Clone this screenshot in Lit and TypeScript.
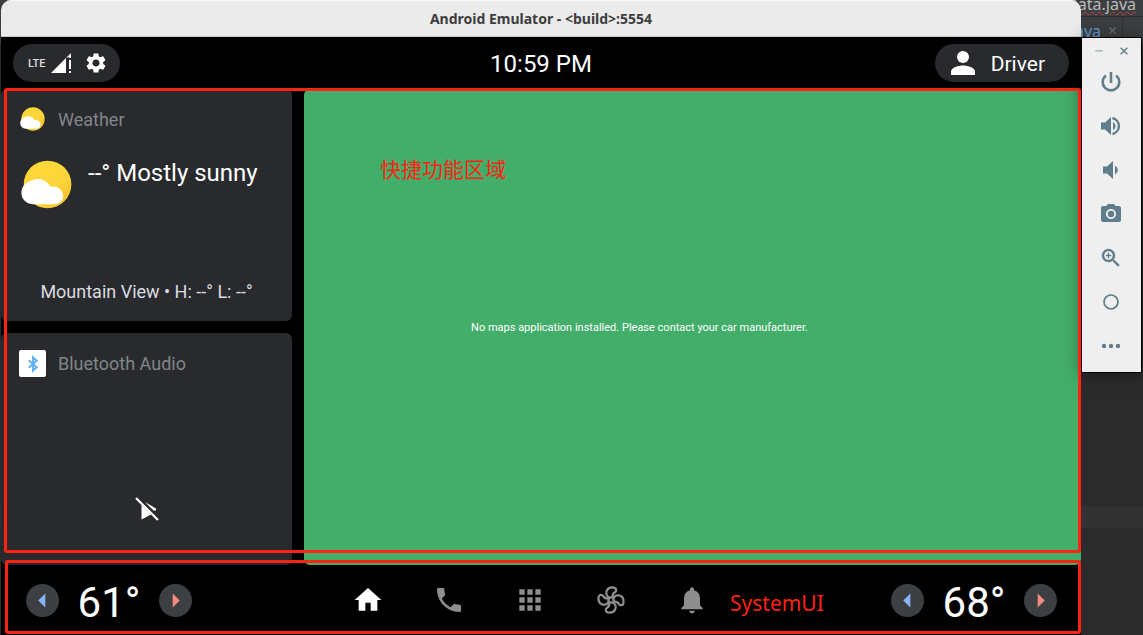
import { LitElement, html, css, svg } from "lit";
import { customElement, property } from "lit/decorators.js";

const gear = "M19.14 12.94c.04-.3.06-.61.06-.94 0-.32-.02-.64-.07-.94l2.03-1.58c.18-.14.23-.41.12-.61l-1.92-3.32c-.12-.22-.37-.29-.59-.22l-2.39.96c-.5-.38-1.03-.7-1.62-.94l-.36-2.54c-.04-.24-.24-.41-.48-.41h-3.84c-.24 0-.43.17-.47.41l-.36 2.54c-.59.24-1.13.57-1.62.94l-2.39-.96c-.22-.08-.47 0-.59.22L2.74 8.87c-.12.21-.08.47.12.61l2.03 1.58c-.05.3-.09.63-.09.94s.02.64.07.94l-2.03 1.58c-.18.14-.23.41-.12.61l1.92 3.32c.12.22.37.29.59.22l2.39-.96c.5.38 1.03.7 1.62.94l.36 2.54c.05.24.24.41.48.41h3.84c.24 0 .44-.17.47-.41l.36-2.54c.59-.24 1.13-.56 1.62-.94l2.39.96c.22.08.47 0 .59-.22l1.92-3.32c.12-.22.07-.47-.12-.61l-2.01-1.58zM12 15.6c-1.98 0-3.6-1.62-3.6-3.6s1.62-3.6 3.6-3.6 3.6 1.62 3.6 3.6-1.62 3.6-3.6 3.6z";

const petal = "M10.800 10.400C8.800 9.300 8 7 8.800 5C9.700 3 12.200 2.400 14.200 2.700C16.400 3.100 16.300 5.400 14.900 6.200C13.400 7 13 8.300 13.300 10.200";

const icons = {
  signal: svg`<path d="M2 22 17 7V22z"/><path d="M17 7 22 2v5h-2v-1z"/><path d="M20 9h2v9h-2zM20 20h2v2h-2z"/>`,
  gear: svg`<path fill-rule="evenodd" d=${gear}/>`,
  person: svg`<circle cx="12" cy="6" r="6"/><path d="M0 24v-3.500C0 16.500 8 14.500 12 14.500s12 2 12 6V24z"/>`,
  home: svg`<path d="M10 20v-6h4v6h5v-8h3L12 3 2 12h3v8z"/>`,
  phone: svg`<path d="M20 15.500c-1.250 0-2.450-.2-3.570-.57-.1-.03-.21-.05-.31-.05-.26 0-.51.1-.71.29l-2.200 2.200c-2.830-1.440-5.150-3.750-6.590-6.580l2.200-2.210c.28-.27.36-.66.25-1.010C8.700 6.450 8.500 5.250 8.500 4c0-.55-.45-1-1-1H4c-.55 0-1 .45-1 1 0 9.390 7.610 17 17 17 .55 0 1-.45 1-1v-3.500c0-.55-.45-1-1-1z"/>`,
  apps: svg`<path d="M4 8h4V4H4v4zm6 12h4v-4h-4v4zm-6 0h4v-4H4v4zm0-6h4v-4H4v4zm6 0h4v-4h-4v4zm6-10v4h4V4h-4zm-6 4h4V4h-4v4zm6 6h4v-4h-4v4zm0 6h4v-4h-4v4z"/>`,
  fan: svg`<g fill="none" stroke="currentColor" stroke-width="1.700"><circle cx="12" cy="12" r="2"/>${[0, 90, 180, 270].map((a) => svg`<path transform="rotate(${a} 12 12)" d=${petal}/>`)}</g>`,
  bell: svg`<path d="M12 22c1.100 0 2-.9 2-2h-4c0 1.100.89 2 2 2zm6-6v-5c0-3.070-1.640-5.640-4.500-6.320V4c0-.83-.67-1.500-1.500-1.500s-1.500.67-1.500 1.500v.68C7.630 5.360 6 7.920 6 11v5l-2 2v1h16v-1l-2-2z"/>`,
  power: svg`<path d="M12 2v11M17 5.400a8.300 8.300 0 1 1-10 0" fill="none" stroke="currentColor" stroke-width="2.500"/>`,
  loud: svg`<path d="M2 8.500v7h4l6 5.500V3L6 8.500H2zm14.500 3.500c0-1.770-1.020-3.290-2.500-4.030v8.050c1.480-.73 2.500-2.250 2.500-4.020z"/><path d="M13.500 4A8.200 8.200 0 0 1 13.500 20" fill="none" stroke="currentColor" stroke-width="2.400"/>`,
  quiet: svg`<path d="M18.800 12c0-1.970-1.120-3.590-2.800-4.330v8.650c1.680-.73 2.800-2.350 2.800-4.320zM4 8.500v7h4l6 5.500V3L8 8.500H4z"/>`,
  camera: svg`<circle cx="12" cy="12" r="3.200"/><path d="M9 2 7.170 4H4c-1.100 0-2 .9-2 2v12c0 1.100.9 2 2 2h16c1.100 0 2-.9 2-2V6c0-1.100-.9-2-2-2h-3.170L15 2H9zm3 15c-2.760 0-5-2.240-5-5s2.240-5 5-5 5 2.240 5 5-2.240 5-5 5z"/>`,
  zoom: svg`<path d="M15.500 14h-.79l-.28-.27C15.410 12.590 16 11.110 16 9.500 16 5.910 13.090 3 9.500 3S3 5.910 3 9.500 5.910 16 9.500 16c1.610 0 3.090-.59 4.230-1.570l.27.28v.79l5 4.990L20.490 19l-4.990-5zm-6 0C7.010 14 5 11.990 5 9.500S7.010 5 9.500 5 14 7.010 14 9.500 11.990 14 9.500 14zM12 10h-2v2H9v-2H7V9h2V7h1v2h2v1z" stroke="currentColor" stroke-width=".4"/>`,
  circle: svg`<circle cx="12" cy="12" r="7" fill="none" stroke="currentColor" stroke-width="1.700"/>`,
  more: svg`<circle cx="5" cy="12" r="2.200"/><circle cx="12" cy="12" r="2.200"/><circle cx="19" cy="12" r="2.200"/>`,
  minus: svg`<path d="M3 10h18v3H3z" opacity=".6"/>`,
  close: svg`<path d="m4 4 16 16M20 4 4 20" fill="none" stroke="currentColor" stroke-width="3.500"/>`,
  left: svg`<path d="M16 2v20L6 12z"/>`,
  right: svg`<path d="M8 2v20l10-10z"/>`,
  sun: svg`<defs><linearGradient id="g" x1="0" y1="0" x2="1" y2="1"><stop offset="0" stop-color="#fdd835"/><stop offset=".6" stop-color="#fdd53a"/><stop offset="1" stop-color="#f3b92c"/></linearGradient></defs><circle cx="12.500" cy="11.500" r="11.200" fill="url(#g)"/><path fill="#fff" d="M5.500 20.800a5.300 5.300 0 0 1-5.300-5.700c.1-2.500 1.800-4.300 3.600-5 2.600-1.500 6.200-1.900 8.800.8.600.5.900 1.100 1.200 1.700 3-.7 5.800 1.100 6 4 .1 2.500-1.700 4.200-4 4.200z"/>`,
  bluetooth: svg`<path fill="none" stroke="#64b0f4" stroke-width="3" d="m5.500 6.500 12 10.500-5.500 5V2l5.500 5-12 10.500"/>`,
  unavailable: svg`<path d="M1 1 23 23" fill="none" stroke="currentColor" stroke-width="2.200"/><path d="M6.500 8 16 17.500 6.500 22.500zM10 5l11 6.500v2h-2.500z"/>`,
};

type IconName = keyof typeof icons;

@customElement("ui-icon")
export class UiIcon extends LitElement {
  @property() name: IconName = "home";
  static styles = css`
    :host { display: block; flex: none; width: 24px; height: 24px; }
    svg { display: block; width: 100%; height: 100%; fill: currentColor; overflow: visible; }
  `;
  render() {
    return html`<svg viewBox="0 0 24 24" aria-hidden="true">${icons[this.name]}</svg>`;
  }
}

@customElement("temp-control")
export class TempControl extends LitElement {
  @property({ type: Number }) value = 61;
  static styles = css`
    :host { display: flex; align-items: center; gap: 18px; }
    button { display: grid; place-items: center; width: 33px; height: 33px; border: 0; padding: 0; border-radius: 50%; background: #3c4043; }
    ui-icon { width: 17px; height: 17px; }
    .cool { color: #8ab4f8; }
    .warm { color: #f28b82; }
    .value { width: 64px; text-align: center; font: 42px/48px Roboto, sans-serif; color: #fff; padding-top: 6px; }
  `;
  render() {
    return html`
      <button class="cool" aria-label="Cooler"><ui-icon name="left"></ui-icon></button>
      <span class="value">${this.value}°</span>
      <button class="warm" aria-label="Warmer"><ui-icon name="right"></ui-icon></button>
    `;
  }
}

@customElement("emulator-tools")
export class EmulatorTools extends LitElement {
  static styles = css`
    :host { display: block; box-sizing: border-box; border: 1px solid #000; background: #efefef; padding-bottom: 4px; color: #607d8b; box-shadow: 0 2px 18px rgba(0, 0, 0, 0.4); }
    button { display: grid; place-items: center; border: 0; padding: 0 1px 0 0; background: none; color: inherit; width: 100%; height: 44px; }
    .window { display: flex; justify-content: center; gap: 5px; padding-top: 4px; }
    .window button { width: 20px; height: 18px; padding: 0; }
    .window ui-icon { width: 10px; height: 10px; }
  `;
  render() {
    const tools: [IconName, string][] = [
      ["power", "Power"], ["loud", "Volume up"], ["quiet", "Volume down"], ["camera", "Take screenshot"],
      ["zoom", "Zoom"], ["circle", "Home"], ["more", "More"],
    ];
    return html`
      <div class="window">
        <button aria-label="Minimize"><ui-icon name="minus"></ui-icon></button>
        <button aria-label="Close"><ui-icon name="close"></ui-icon></button>
      </div>
      ${tools.map(([icon, label]) => html`<button aria-label=${label}><ui-icon name=${icon}></ui-icon></button>`)}
    `;
  }
}

@customElement("app-root")
export class AppRoot extends LitElement {
  static styles = css`
    :host { display: block; position: relative; min-height: 100vh; overflow: hidden; background: #2b2b2b; font-family: Roboto, sans-serif; color: #fff; }
    .ide { position: absolute; inset: 0; color: #bbb; font: 16px/18px "Noto Sans", sans-serif; }
    .path { display: flex; justify-content: flex-end; height: 16px; padding-right: 7px; background: #3c3f41; border-bottom: 1px solid #2b2d2e; line-height: 8px; }
    .path span { text-decoration: underline wavy #bc3f3c 1px; }
    .tabs { display: flex; justify-content: flex-end; align-items: center; height: 27px; background: #3c3f41; }
    .tab { display: flex; gap: 7px; align-items: center; height: 27px; padding-right: 5px; margin-right: 20px; border-right: 1px solid #2f3133; color: #5f9bd0; }
    .tab ui-icon { width: 9px; height: 9px; color: #6e7275; }
    .caret-line { position: absolute; top: 506px; left: 0; right: 0; height: 22px; background: #323232; }
    .desktop { position: relative; display: grid; grid-template-columns: minmax(0, 1fr) 61px; align-items: start; min-height: 100vh; padding: 0 1px; }
    .emulator { display: flex; flex-direction: column; min-height: 100vh; border-radius: 10px 10px 0 0; overflow: hidden; background: #000; }
    emulator-tools { margin-top: 37px; }
    .title { margin: 0; height: 37px; box-sizing: border-box; background: #ebebeb; border-top: 1px solid #f8f8f8; border-bottom: 1px solid #c8c8c8; color: #3d3d3d; text-align: center; font: bold 14px/35px "Noto Sans", sans-serif; }
    .status { display: grid; grid-template-columns: 1fr auto 1fr; align-items: center; height: 52px; padding: 0 12px; }
    .pill { display: flex; align-items: center; height: 38px; border: 0; border-radius: 19px; background: #292a2d; color: #fff; font: 21px/24px Roboto, sans-serif; }
    .network { justify-self: start; padding: 0 12px 0 15px; gap: 3px; }
    .network span { padding-top: 2px; font-size: 11px; font-weight: 500; color: #dadce0; }
    .network ui-icon:last-child { margin-left: 8px; }
    .driver { justify-self: end; padding: 0 24px 0 16px; gap: 16px; }
    .driver span { padding-top: 2px; }
    .clock { padding-top: 2px; font-size: 24px; line-height: 28px; }
    .main { flex: 1; display: grid; grid-template-columns: 291px minmax(0, 1fr); gap: 12px; }
    .cards { display: grid; grid-template-rows: 1fr 1fr; gap: 12px; }
    .card { display: flex; flex-direction: column; border-radius: 6px; background: #292a2d; padding: 17px 16px; }
    .card-head { display: flex; align-items: center; gap: 12px; height: 27px; padding-left: 2px; color: #80868b; font-size: 18px; line-height: 24px; }
    .card-head h2 { margin: 0; font: inherit; }
    .card-head > ui-icon { width: 25px; height: 25px; margin: 0 1px; }
    .app { display: grid; place-items: center; width: 27px; height: 27px; border-radius: 2px; background: #fff; }
    .app ui-icon { width: 16px; height: 16px; }
    .weather { display: flex; gap: 16px; padding: 27px 4px 0; font-size: 24px; line-height: 26px; }
    .weather ui-icon { width: 51px; height: 51px; }
    .weather p, .place { margin: 0; }
    .place { margin-top: auto; text-align: center; color: #dadce0; font-size: 18px; line-height: 24px; }
    .off { margin: auto auto 27px; }
    .map { display: grid; place-items: center; border-radius: 6px; background: #43ae6a; font-size: 11px; line-height: 16px; text-align: center; }
    .map p { margin: 0; padding: 2px 106px 0 0; }
    .nav { display: grid; grid-template-columns: 1fr auto 1fr; align-items: center; height: 70px; padding: 0 24px 0 25px; }
    .nav temp-control:last-child { justify-self: end; }
    .apps { display: flex; padding-right: 24px; color: #8e8e8e; }
    .apps a { display: grid; place-items: center; width: 81px; height: 48px; color: inherit; }
    .apps a.current { color: #fff; }
    .apps ui-icon { width: 32px; height: 32px; }
    .mark { position: absolute; box-sizing: border-box; border: 3px solid #ff2314; border-radius: 3px; left: 4px; right: 62px; pointer-events: none; }
    .mark-main { top: 88px; bottom: 82px; }
    .mark-nav { left: 5px; top: 560px; bottom: 1px; }
    .note { position: absolute; color: #ff2314; font: 21px/28px "Noto Sans", "Noto Sans CJK SC", sans-serif; }
    .note-main { left: 373px; top: 64px; }
    .note-nav { left: 722px; top: 26px; }
  `;
  render() {
    const apps: [IconName, string][] = [["home", "Home"], ["phone", "Phone"], ["apps", "Apps"], ["fan", "Climate"], ["bell", "Notifications"]];
    return html`
      <div class="ide">
        <div class="path"><span>Data.java</span></div>
        <div class="tabs"><div class="tab">.java<ui-icon name="close"></ui-icon></div></div>
        <div class="caret-line"></div>
      </div>
      <div class="desktop">
        <section class="emulator">
          <h1 class="title">Android Emulator - &lt;build&gt;:5554</h1>
          <header class="status">
            <button class="pill network" aria-label="Network and settings">
              <span>LTE</span><ui-icon name="signal"></ui-icon><ui-icon name="gear"></ui-icon>
            </button>
            <time class="clock">10:59 PM</time>
            <button class="pill driver"><ui-icon name="person"></ui-icon><span>Driver</span></button>
          </header>
          <main class="main">
            <div class="cards">
              <article class="card">
                <div class="card-head"><ui-icon name="sun"></ui-icon><h2>Weather</h2></div>
                <div class="weather"><ui-icon name="sun"></ui-icon><p>--° Mostly sunny</p></div>
                <p class="place">Mountain View • H: --° L: --°</p>
              </article>
              <article class="card">
                <div class="card-head"><span class="app"><ui-icon name="bluetooth"></ui-icon></span><h2>Bluetooth Audio</h2></div>
                <ui-icon class="off" name="unavailable"></ui-icon>
              </article>
            </div>
            <section class="map"><p>No maps application installed. Please contact your car manufacturer.</p></section>
          </main>
          <footer class="nav">
            <temp-control .value=${61}></temp-control>
            <nav class="apps">
              ${apps.map(([icon, label], i) => html`<a href="#" class=${i === 0 ? "current" : ""} aria-label=${label}><ui-icon name=${icon}></ui-icon></a>`)}
            </nav>
            <temp-control .value=${68}></temp-control>
          </footer>
        </section>
        <emulator-tools></emulator-tools>
      </div>
      <div class="mark mark-main"><span class="note note-main">快捷功能区域</span></div>
      <div class="mark mark-nav"><span class="note note-nav">SystemUI</span></div>
    `;
  }
}
